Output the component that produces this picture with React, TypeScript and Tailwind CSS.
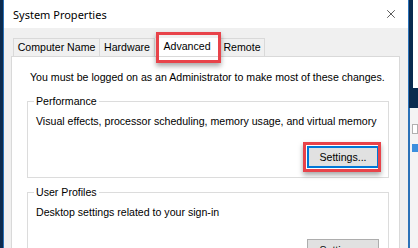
import { X } from "lucide-react";

const body = "font-['Liberation_Sans',Arial,sans-serif] text-[10.6px] leading-[13px] text-black";

function Tab({ label, w, className = "" }: { label: string; w: number; className?: string }) {
  return (
    <div
      style={{ width: w }}
      className={`flex h-[18px] items-center justify-center border border-b-0 border-[#d9d9d9] bg-[#f0f0f0] ${className}`}
    >
      {label}
    </div>
  );
}

function Group({ title, text, children }: { title: string; text: string; children?: React.ReactNode }) {
  return (
    <div className="relative ml-[15px] w-[362px] border border-[#dcdcdc]">
      <span className="absolute -top-[7px] left-[6px] bg-white px-[2px]">{title}</span>
      <div className="pl-[8px] pt-[13px]">{text}</div>
      {children}
    </div>
  );
}

export default function App() {
  return (
    <div className="flex h-[248px] w-[418px] overflow-hidden bg-[#0b2a4e]">
      <div className="w-[3px] shrink-0" />
      <div className={`relative flex w-[406px] shrink-0 flex-col border-x border-[#2b72b8] ${body}`}>
        {/* title bar */}
        <div className="flex h-[28px] shrink-0 items-center justify-between bg-white pl-[9px] pr-[10px]">
          <span className="font-['Noto_Sans',sans-serif] text-[11px] text-black">System Properties</span>
          <X size={14} strokeWidth={1.1} className="text-black" />
        </div>
        <div className="flex flex-1 flex-col bg-[#f0f0f0] pl-[7px] pt-[10px]">
          <div className="ml-[2px] flex">
            <Tab label="Computer Name" w={87} />
            <Tab label="Hardware" w={55} className="border-l-0" />
            <div className="flex h-[18px] w-[64px] items-center justify-center bg-white pb-[2px]">Advanced</div>
            <Tab label="Remote" w={46} />
          </div>
          <div className="flex-1 w-[389px] border border-[#d9d9d9] bg-white pt-[14px]">
            <div className="pl-[18px]">You must be logged on as an Administrator to make most of these changes.</div>
            <div className="mt-[17px]">
              <Group title="Performance" text="Visual effects, processor scheduling, memory usage, and virtual memory">
                <div className="flex justify-end pb-[9px] pr-[9px] pt-[18px]">
                  <div className="flex h-[22px] w-[72px] items-center justify-center border-2 border-[#0078d7] bg-[#e1e1e1]">
                    Settings...
                  </div>
                </div>
              </Group>
            </div>
            <div className="mt-[14px]">
              <Group title="User Profiles" text="Desktop settings related to your sign-in">
                <div className="flex justify-end pr-[9px] pt-[20px]">
                  <div className="flex h-[22px] w-[72px] items-center justify-center border border-[#adadad] bg-[#e1e1e1]">
                    Settings...
                  </div>
                </div>
              </Group>
            </div>
          </div>
        </div>
        {/* highlight boxes */}
        <div className="absolute left-[152px] top-[32px] h-[31px] w-[65px] border-[3px] border-[#e8434a] shadow-[0_3px_5px_rgba(0,0,0,0.35)]" />
        <div className="absolute left-[299px] top-[142px] h-[30px] w-[78px] border-[3px] border-[#e8434a] shadow-[0_3px_5px_rgba(0,0,0,0.35)]" />
      </div>
      <div className="flex w-[9px] shrink-0 flex-col">
        <div className="flex h-[88px]">
          <div className="w-[4px] bg-[#0b2a4e]" />
          <div className="flex-1 bg-white" />
        </div>
        <div className="h-[20px] bg-[#0b2a4e]" />
        <div className="flex flex-1 flex-col gap-[10px] border-l border-[#2b72b8] bg-[#f4f4f4] pl-[2px] pt-[16px]">
          <div className="h-[10px] border border-[#b0b0b0] bg-white" />
          <div className="h-[8px] bg-[#3c8fde]" />
        </div>
      </div>
    </div>
  );
}
